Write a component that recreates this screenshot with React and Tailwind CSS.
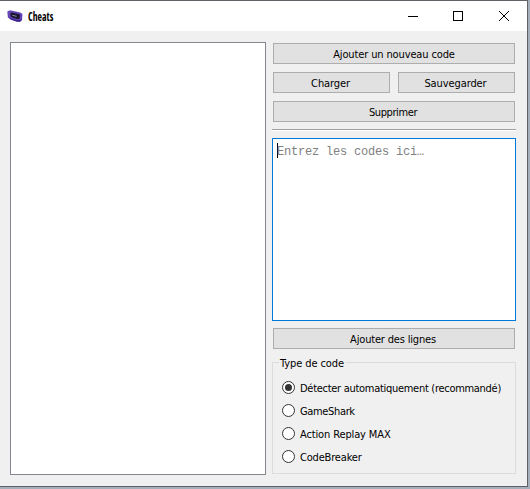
import React from "react";

const uiFont = "font-['DejaVu_Sans_Condensed','DejaVu_Sans',sans-serif] [font-stretch:condensed]";

function Button({ children, className = "" }) {
  return (
    <button
      className={`flex h-[21px] items-center justify-center border border-[#adadad] bg-[#e1e1e1] pt-[2px] text-[11px] leading-none whitespace-nowrap text-black ${className}`}
    >
      {children}
    </button>
  );
}

function Radio({ label, checked, className = "" }) {
  return (
    <label className="flex h-[23px] items-center gap-[5px] text-[11px] leading-none whitespace-nowrap">
      <svg width="13" height="13" viewBox="0 0 13 13" className="shrink-0">
        <circle cx="6.5" cy="6.5" r="6" fill="#fff" stroke="#333" />
        {checked && <circle cx="6.5" cy="6.5" r="3.5" fill="#333" />}
      </svg>
      <span className={`pt-[2px] ${className}`}>{label}</span>
    </label>
  );
}

function AppIcon() {
  return (
    <svg width="16" height="14" viewBox="0 0 16 14" className="shrink-0">
      <path d="M.3 2.500 3 1.300l10.300 2.300 2.200 1.300-.4 5.500-1.500 1.700-3.800.1-6.600-2.300L.9 8.500Z" fill="#6545b8" />
      <path d="M.9 7.300 3.200 9l6.500 2 3.100.1 2.300-1.300-.7 2-1.500 1.100-3.300-.2-6.200-2.200Z" fill="#3d2890" />
      <path d="m3.400 4.200 1.300-.7 7.700 1.800.7 1.200-.6 2.900-1.500.8-6-1.700-1.500-1.600Z" fill="#1b1730" />
      <path d="m5.300 6.300 4.300 1" stroke="#8d8c9d" strokeWidth="1" />
    </svg>
  );
}

export default function App() {
  return (
    <div className={`h-[489px] w-[530px] overflow-hidden bg-[#a5aebb] pr-[2px] pb-[2px] text-black ${uiFont}`}>
      <div className="flex h-[487px] w-[528px] flex-col border-t border-r border-b border-[#5f6167] bg-[#f0f0f0]">
        <header className="flex h-[30px] shrink-0 items-center bg-white pl-[7px]">
          <AppIcon />
          <span className="ml-[5px] origin-left scale-x-[0.75] text-[13px] leading-none font-bold font-['Open_Sans',sans-serif]">
            Cheats
          </span>
          <svg width="102" height="12" viewBox="0 0 102 12" className="mr-[17px] ml-auto" fill="none" stroke="#000">
            <path d="M0 6.500h10" shapeRendering="crispEdges" />
            <path d="M45.500 1.500h9v9h-9Z" shapeRendering="crispEdges" />
            <path d="m91 1 10 10m0-10-10 10" />
          </svg>
        </header>
        <main className="flex gap-[6px] pt-[11px] pl-[10px]">
          <div className="h-[433px] w-[256px] border border-[#828790] bg-white" />
          <div className="flex w-[244px] flex-col">
            <div className="mx-px mt-px flex flex-col gap-2">
              <Button className="tracking-[-0.13px]">Ajouter un nouveau code</Button>
              <div className="flex gap-2">
                <Button className="w-[117px] pr-[2px] tracking-[-0.1px]">Charger</Button>
                <Button className="w-[117px] pr-[2px] tracking-[-0.1px]">Sauvegarder</Button>
              </div>
              <Button className="pr-[2px] tracking-[-0.4px]">Supprimer</Button>
            </div>
            <div className="mt-[7px] h-[2px] border-t border-b border-t-[#a0a0a0] border-b-white" />
            <div className="mt-[7px] flex h-[183px] border border-[#0078d7] bg-white pt-[4px] pl-[4px]">
              <div className="h-[15px] w-px bg-black" />
              <span className="mt-[2px] -ml-px h-[14px] font-['Liberation_Mono',monospace] text-[12px] leading-[14px] tracking-[-0.2px] whitespace-nowrap text-[#808080]">
                Entrez les codes ici…
              </span>
            </div>
            <Button className="mx-px mt-[7px] pr-[2px] tracking-[-0.18px]">Ajouter des lignes</Button>
            <fieldset className="relative mt-[13px] h-[112px] min-w-0 border border-[#dcdcdc] pt-[13px] pl-[9px]">
              <span className="absolute top-[-6px] left-[6px] bg-[#f0f0f0] px-px text-[11px] leading-[14px] tracking-[-0.1px]">Type de code</span>
              <Radio label="Détecter automatiquement (recommandé)" checked className="tracking-[-0.29px]" />
              <Radio label="GameShark" className="tracking-[-0.35px]" />
              <Radio label="Action Replay MAX" className="tracking-[-0.13px]" />
              <Radio label="CodeBreaker" className="tracking-[-0.18px]" />
            </fieldset>
          </div>
        </main>
      </div>
    </div>
  );
}
